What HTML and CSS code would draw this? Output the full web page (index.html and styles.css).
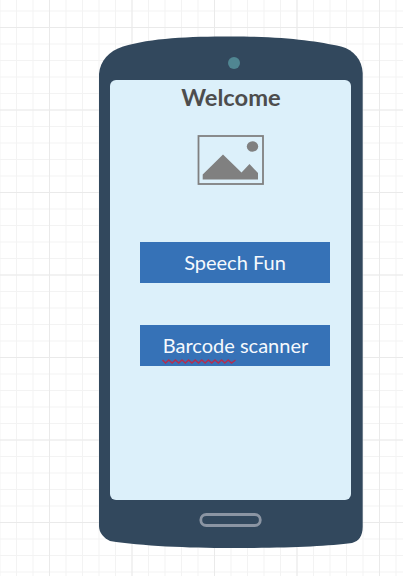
FILE: index.html
```html
<!DOCTYPE html>
<html lang="en">
<head>
<meta charset="utf-8">
<title>Welcome</title>
<link rel="stylesheet" href="styles.css">
</head>
<body>
<main class="phone">
  <svg class="shell" viewBox="0 0 264 512" aria-hidden="true">
    <path d="M0 38C1 25 10 15 24 10.500C52 2 90 .5 132 .5C186 .5 216 5 242 10.500C255 14 263 24 263.700 37V491C263.500 500 260 505 253 507C228 510.500 184 512 132 512C88 512 43 510 11 505C5 502 0 497 0 490Z"/>
  </svg>
  <div class="camera"></div>
  <section class="screen">
    <h1 class="title">Welcome</h1>
    <svg class="picture" width="67" height="51" viewBox="0 0 67 51" aria-hidden="true">
      <rect class="frame" x="1.500" y="1" width="64.500" height="48"/>
      <path d="M5.700 44.500V39.500L26 19.500L44.500 37.500L52.500 29L61 38V44.500Z"/>
      <ellipse cx="55.500" cy="11.500" rx="5.700" ry="5.200"/>
    </svg>
    <div class="button">Speech Fun</div>
    <div class="button button-scan"><span class="misspelt">Barcode<svg class="squiggle" width="75" height="5" viewBox="0 0 75 5" aria-hidden="true"><path d="M.5 1L3.500 4L6.800 1L10.100 4L13.400 1L16.700 4L20 1L23.300 4L26.600 1L29.900 4L33.200 1L36.500 4L39.800 1L43.100 4L46.400 1L49.700 4L53 1L56.300 4L59.600 1L62.900 4L66.200 1L69.500 4L73.500 1"/></svg></span>&nbsp;scanner</div>
  </section>
  <svg class="home" width="64" height="14" viewBox="0 0 64 14" aria-hidden="true">
    <rect x="1.800" y="1.500" width="59.500" height="11" rx="5.500"/>
  </svg>
</main>
</body>
</html>
```
FILE: styles.css
```css
* {
  box-sizing: border-box;
}

body {
  margin: 0;
  height: 576px;
  overflow: hidden;
  padding: 36px 0 0 99px;
  font-family: Lato, "Liberation Sans", sans-serif;
  background-color: #fff;
  background-image:
    linear-gradient(to right, #eaeaea 1.2px, transparent 1.2px),
    linear-gradient(to bottom, #eaeaea 1.2px, transparent 1.2px),
    linear-gradient(to right, #f3f3f3 1.2px, transparent 1.2px),
    linear-gradient(to bottom, #f3f3f3 1.2px, transparent 1.2px);
  background-size: 82.5px 82.5px, 82.5px 82.5px, 16.5px 16.5px, 16.5px 16.5px;
  background-position: 49px 27px, 49px 27px, 49px 27px, 49px 27px;
}

.phone {
  position: relative;
  display: flex;
  flex-direction: column;
  align-items: center;
  width: 264px;
  height: 512px;
}

.shell {
  position: absolute;
  inset: 0;
  z-index: -1;
  width: 264px;
  height: 512px;
  fill: #32485d;
}

.camera {
  width: 12px;
  height: 12px;
  margin: 21px 0 11px 5px;
  border-radius: 50%;
  background: #508692;
}

.screen {
  display: flex;
  flex-direction: column;
  align-items: center;
  width: 240.5px;
  height: 419.5px;
  margin-right: 1px;
  border-radius: 6px;
  background: #dcf0fa;
}

.title {
  margin: 2px 0 22px 1px;
  font-size: 23.700px;
  line-height: 31px;
  font-weight: 700;
  color: #4d4d4d;
}

.picture {
  fill: #808080;
  margin-bottom: 56px;
}

.frame {
  fill: none;
  stroke: #808080;
  stroke-width: 1.8;
}

.button {
  display: flex;
  align-items: center;
  justify-content: center;
  width: 190px;
  height: 41px;
  margin: 0 0 41.500px 9px;
  padding-bottom: 2px;
  font-size: 20px;
  color: #f5f9fd;
  background: #3672b7;
}

.button-scan {
  padding: 0 0 0 1px;
}

.misspelt {
  position: relative;
}

.squiggle {
  position: absolute;
  left: -1px;
  bottom: -7px;
  fill: none;
  stroke: #b62c4c;
  stroke-width: 1.400;
}

.home {
  margin-top: 13.700px;
  fill: none;
  stroke: #8b95a3;
  stroke-width: 2.800;
}
```
